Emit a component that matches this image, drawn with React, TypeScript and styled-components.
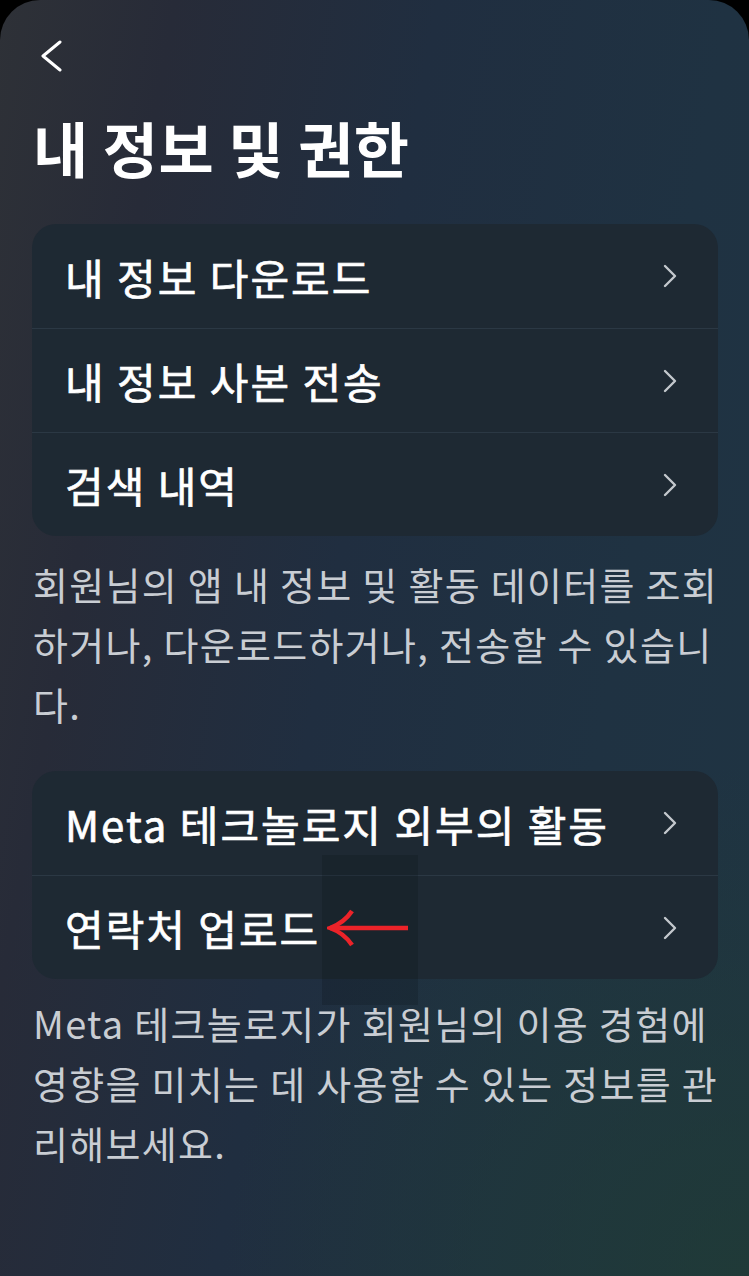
import React from "react";
import styled, { createGlobalStyle } from "styled-components";

const GlobalStyle = createGlobalStyle`
  html, body {
    margin: 0;
    padding: 0;
    background: #000;
  }
  * { box-sizing: border-box; }
`;

const Screen = styled.div`
  position: relative;
  width: 749px;
  min-height: 1276px;
  border-radius: 40px 40px 0 0;
  overflow: hidden;
  padding: 40px 31px 0 32px;
  font-family: "Noto Sans CJK KR", "Noto Sans", sans-serif;
  color: #fff;
  background:
    radial-gradient(ellipse 70% 40% at 100% 100%, rgba(32, 60, 52, 0.75), rgba(32, 60, 52, 0) 100%),
    linear-gradient(100deg, #2e3137 0%, #272b38 18%, #202e40 45%, #1f3242 75%, #1f3443 100%);
`;

const BackButton = styled.button`
  display: block;
  width: 26px;
  height: 32px;
  margin-left: 7px;
  padding: 0;
  border: 0;
  background: none;
  color: #fff;
`;

const Title = styled.h1`
  margin: 40px 0 0 1px;
  font-size: 60px;
  line-height: 70px;
  font-weight: 700;
  letter-spacing: 0.5px;
`;

const Card = styled.div<{ $top: number }>`
  margin-top: ${(p) => p.$top}px;
  border-radius: 24px;
  background: #1e2933;
  overflow: hidden;
`;

const Row = styled.div`
  display: flex;
  align-items: center;
  justify-content: space-between;
  height: 104px;
  padding: 0 41px 0 33px;
  & + & {
    border-top: 1px solid #2b3844;
  }
`;

const RowLabel = styled.span`
  display: flex;
  align-items: center;
  font-size: 42px;
  font-weight: 400;
  letter-spacing: 2px;
  -webkit-text-stroke: 0.7px #fff;
  white-space: nowrap;
`;

const Chevron = styled.svg`
  width: 14px;
  height: 24px;
  flex: none;
  color: #c3c8cd;
`;

const Description = styled.p<{ $top: number }>`
  margin: ${(p) => p.$top}px 0 0 1px;
  font-size: 38px;
  line-height: 60px;
  font-weight: 400;
  letter-spacing: 1.3px;
  color: #c9cdd3;
  white-space: nowrap;
`;

const Arrow = styled.svg`
  position: relative;
  z-index: 2;
  width: 82px;
  height: 40px;
  margin-left: 7px;
  flex: none;
`;

const Highlight = styled.div`
  position: absolute;
  z-index: 1;
  left: 322px;
  top: 855px;
  width: 96px;
  height: 150px;
  background: rgba(10, 18, 22, 0.22);
  pointer-events: none;
`;

const RightChevron = () => (
  <Chevron viewBox="0 0 14 24" fill="none">
    <path d="M2 2 L12 12 L2 22" stroke="currentColor" strokeWidth="2.4" strokeLinecap="round" strokeLinejoin="round" />
  </Chevron>
);

type Item = { label: string; arrow?: boolean };

const section1: Item[] = [
  { label: "내 정보 다운로드" },
  { label: "내 정보 사본 전송" },
  { label: "검색 내역" },
];

const section2: Item[] = [
  { label: "Meta 테크놀로지 외부의 활동" },
  { label: "연락처 업로드", arrow: true },
];

const renderRows = (items: Item[]) =>
  items.map((item) => (
    <Row key={item.label}>
      <RowLabel>
        {item.label}
        {item.arrow && (
          <Arrow viewBox="0 0 82 40" fill="none">
            <path d="M3 20 H81" stroke="#ec2329" strokeWidth="4.5" />
            <path d="M25 3 Q17 15 3 20 Q17 25 25 37" stroke="#ec2329" strokeWidth="4.5" fill="none" />
          </Arrow>
        )}
      </RowLabel>
      <RightChevron />
    </Row>
  ));

export default function App() {
  return (
    <>
      <GlobalStyle />
      <Screen>
        <BackButton aria-label="뒤로">
          <svg width="26" height="32" viewBox="0 0 26 32" fill="none">
            <path d="M21 2 L4 16 L21 30" stroke="currentColor" strokeWidth="3" strokeLinecap="round" strokeLinejoin="round" />
          </svg>
        </BackButton>
        <Title>내 정보 및 권한</Title>
        <Card $top={42}>{renderRows(section1)}</Card>
        <Description $top={18}>
          회원님의 앱 내 정보 및 활동 데이터를 조회
          <br />
          하거나, 다운로드하거나, 전송할 수 있습니
          <br />
          다.
        </Description>
        <Card $top={37}>{renderRows(section2)}</Card>
        <Description $top={14}>
          Meta 테크놀로지가 회원님의 이용 경험에
          <br />
          영향을 미치는 데 사용할 수 있는 정보를 관
          <br />
          리해보세요.
        </Description>
        <Highlight />
      </Screen>
    </>
  );
}
